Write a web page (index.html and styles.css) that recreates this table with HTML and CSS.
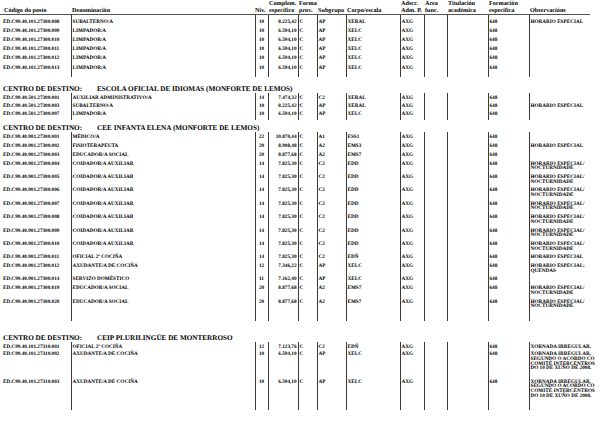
FILE: index.html
```html
<!DOCTYPE html>
<html lang="gl">
<head>
<meta charset="utf-8">
<title>Relación de postos</title>
<link rel="stylesheet" href="styles.css">
</head>
<body>
<div class="page">

<table class="grid hdr">
<colgroup><col class="c1"><col class="c2"><col class="c3"><col class="c4"><col class="c5"><col class="c6"><col class="c7"><col class="c8"><col class="c9"><col class="c10"><col class="c11"><col class="c12"></colgroup>
<tr>
<th class="first">Código do posto</th>
<th>Denominación</th>
<th class="niv-h">Niv.</th>
<th>Complem.<br>específico</th>
<th>Forma<br>prov.</th>
<th>Subgrupo</th>
<th>Corpo/escala</th>
<th>Adscr.<br>Adm. P.</th>
<th>Área<br>func.</th>
<th>Titulación<br>académica</th>
<th>Formación<br>específica</th>
<th>Observacións</th>
</tr>
</table>

<table class="grid blk b1">
<colgroup><col class="c1"><col class="c2"><col class="c3"><col class="c4"><col class="c5"><col class="c6"><col class="c7"><col class="c8"><col class="c9"><col class="c10"><col class="c11"><col class="c12"></colgroup>
<tr><td>ED.C99.40.101.27300.008</td><td>SUBALTERNO/A</td><td class="niv">10</td><td class="num">8.225,42</td><td>C</td><td>AP</td><td>XERAL</td><td>AXG</td><td></td><td></td><td>648</td><td>HORARIO ESPECIAL</td></tr>
<tr><td>ED.C99.40.101.27300.009</td><td>LIMPADOR/A</td><td class="niv">10</td><td class="num">6.594,10</td><td>C</td><td>AP</td><td>XELC</td><td>AXG</td><td></td><td></td><td>648</td><td></td></tr>
<tr><td>ED.C99.40.101.27300.010</td><td>LIMPADOR/A</td><td class="niv">10</td><td class="num">6.594,10</td><td>C</td><td>AP</td><td>XELC</td><td>AXG</td><td></td><td></td><td>648</td><td></td></tr>
<tr><td>ED.C99.40.101.27300.011</td><td>LIMPADOR/A</td><td class="niv">10</td><td class="num">6.594,10</td><td>C</td><td>AP</td><td>XELC</td><td>AXG</td><td></td><td></td><td>648</td><td></td></tr>
<tr><td>ED.C99.40.101.27300.012</td><td>LIMPADOR/A</td><td class="niv">10</td><td class="num">6.594,10</td><td>C</td><td>AP</td><td>XELC</td><td>AXG</td><td></td><td></td><td>648</td><td></td></tr>
<tr><td>ED.C99.40.101.27300.013</td><td>LIMPADOR/A</td><td class="niv">10</td><td class="num">6.594,10</td><td>C</td><td>AP</td><td>XELC</td><td>AXG</td><td></td><td></td><td>648</td><td></td></tr>
<tr class="end end-1"><td></td><td></td><td></td><td></td><td></td><td></td><td></td><td></td><td></td><td></td><td></td><td></td></tr>
</table>

<h2 class="dest d2"><span class="lbl">CENTRO DE DESTINO:</span>ESCOLA OFICIAL DE IDIOMAS (MONFORTE DE LEMOS)</h2>
<table class="grid blk b2">
<colgroup><col class="c1"><col class="c2"><col class="c3"><col class="c4"><col class="c5"><col class="c6"><col class="c7"><col class="c8"><col class="c9"><col class="c10"><col class="c11"><col class="c12"></colgroup>
<tr><td>ED.C99.40.501.27300.001</td><td>AUXILIAR ADMINISTRATIVO/A</td><td class="niv">14</td><td class="num">7.474,32</td><td>C</td><td>C2</td><td>XERAL</td><td>AXG</td><td></td><td></td><td>648</td><td></td></tr>
<tr><td>ED.C99.40.501.27300.003</td><td>SUBALTERNO/A</td><td class="niv">10</td><td class="num">8.225,42</td><td>C</td><td>AP</td><td>XERAL</td><td>AXG</td><td></td><td></td><td>648</td><td>HORARIO ESPECIAL</td></tr>
<tr><td>ED.C99.40.501.27300.007</td><td>LIMPADOR/A</td><td class="niv">10</td><td class="num">6.594,10</td><td>C</td><td>AP</td><td>XELC</td><td>AXG</td><td></td><td></td><td>648</td><td></td></tr>
<tr class="end end-2"><td></td><td></td><td></td><td></td><td></td><td></td><td></td><td></td><td></td><td></td><td></td><td></td></tr>
</table>

<h2 class="dest d3"><span class="lbl">CENTRO DE DESTINO:</span>CEE INFANTA ELENA (MONFORTE DE LEMOS)</h2>
<table class="grid blk b3">
<colgroup><col class="c1"><col class="c2"><col class="c3"><col class="c4"><col class="c5"><col class="c6"><col class="c7"><col class="c8"><col class="c9"><col class="c10"><col class="c11"><col class="c12"></colgroup>
<tr><td>ED.C99.40.901.27300.001</td><td>MÉDICO/A</td><td class="niv">22</td><td class="num">10.870,44</td><td>C</td><td>A1</td><td>ESS1</td><td>AXG</td><td></td><td></td><td>648</td><td></td></tr>
<tr><td>ED.C99.40.901.27300.002</td><td>FISIOTERAPEUTA</td><td class="niv">20</td><td class="num">8.908,48</td><td>C</td><td>A2</td><td>EMS3</td><td>AXG</td><td></td><td></td><td>648</td><td>HORARIO ESPECIAL</td></tr>
<tr><td>ED.C99.40.901.27300.003</td><td>EDUCADOR/A SOCIAL</td><td class="niv">20</td><td class="num">8.877,68</td><td>C</td><td>A2</td><td>EMS7</td><td>AXG</td><td></td><td></td><td>648</td><td></td></tr>
<tr><td>ED.C99.40.901.27300.004</td><td>COIDADOR/A AUXILIAR</td><td class="niv">14</td><td class="num">7.825,30</td><td>C</td><td>C2</td><td>EDD</td><td>AXG</td><td></td><td></td><td>648</td><td>HORARIO ESPECIAL/<br>NOCTURNIDADE</td></tr>
<tr><td>ED.C99.40.901.27300.005</td><td>COIDADOR/A AUXILIAR</td><td class="niv">14</td><td class="num">7.825,30</td><td>C</td><td>C2</td><td>EDD</td><td>AXG</td><td></td><td></td><td>648</td><td>HORARIO ESPECIAL/<br>NOCTURNIDADE</td></tr>
<tr><td>ED.C99.40.901.27300.006</td><td>COIDADOR/A AUXILIAR</td><td class="niv">14</td><td class="num">7.825,30</td><td>C</td><td>C2</td><td>EDD</td><td>AXG</td><td></td><td></td><td>648</td><td>HORARIO ESPECIAL/<br>NOCTURNIDADE</td></tr>
<tr><td>ED.C99.40.901.27300.007</td><td>COIDADOR/A AUXILIAR</td><td class="niv">14</td><td class="num">7.825,30</td><td>C</td><td>C2</td><td>EDD</td><td>AXG</td><td></td><td></td><td>648</td><td>HORARIO ESPECIAL/<br>NOCTURNIDADE</td></tr>
<tr><td>ED.C99.40.901.27300.008</td><td>COIDADOR/A AUXILIAR</td><td class="niv">14</td><td class="num">7.825,30</td><td>C</td><td>C2</td><td>EDD</td><td>AXG</td><td></td><td></td><td>648</td><td>HORARIO ESPECIAL/<br>NOCTURNIDADE</td></tr>
<tr><td>ED.C99.40.901.27300.009</td><td>COIDADOR/A AUXILIAR</td><td class="niv">14</td><td class="num">7.825,30</td><td>C</td><td>C2</td><td>EDD</td><td>AXG</td><td></td><td></td><td>648</td><td>HORARIO ESPECIAL/<br>NOCTURNIDADE</td></tr>
<tr><td>ED.C99.40.901.27300.010</td><td>COIDADOR/A AUXILIAR</td><td class="niv">14</td><td class="num">7.825,30</td><td>C</td><td>C2</td><td>EDD</td><td>AXG</td><td></td><td></td><td>648</td><td>HORARIO ESPECIAL/<br>NOCTURNIDADE</td></tr>
<tr><td>ED.C99.40.901.27300.011</td><td>OFICIAL 2ª COCIÑA</td><td class="niv">14</td><td class="num">7.825,30</td><td>C</td><td>C2</td><td>EDÑ</td><td>AXG</td><td></td><td></td><td>648</td><td>HORARIO ESPECIAL</td></tr>
<tr><td>ED.C99.40.901.27300.012</td><td>AXUDANTE/A DE COCIÑA</td><td class="niv">12</td><td class="num">7.346,22</td><td>C</td><td>AP</td><td>XELC</td><td>AXG</td><td></td><td></td><td>648</td><td>HORARIO ESPECIAL:<br>QUENDAS</td></tr>
<tr><td>ED.C99.40.901.27300.014</td><td>SERVIZO DOMÉSTICO</td><td class="niv">11</td><td class="num">7.162,40</td><td>C</td><td>AP</td><td>XELC</td><td>AXG</td><td></td><td></td><td>648</td><td></td></tr>
<tr><td>ED.C99.40.901.27300.019</td><td>EDUCADOR/A SOCIAL</td><td class="niv">20</td><td class="num">8.877,68</td><td>C</td><td>A2</td><td>EMS7</td><td>AXG</td><td></td><td></td><td>648</td><td>HORARIO ESPECIAL/<br>NOCTURNIDADE</td></tr>
<tr><td>ED.C99.40.901.27300.020</td><td>EDUCADOR/A SOCIAL</td><td class="niv">20</td><td class="num">8.877,68</td><td>C</td><td>A2</td><td>EMS7</td><td>AXG</td><td></td><td></td><td>648</td><td>HORARIO ESPECIAL/<br>NOCTURNIDADE</td></tr>
<tr class="end end-3"><td></td><td></td><td></td><td></td><td></td><td></td><td></td><td></td><td></td><td></td><td></td><td></td></tr>
</table>

<h2 class="dest d4"><span class="lbl">CENTRO DE DESTINO:</span>CEIP PLURILINGÜE DE MONTERROSO</h2>
<table class="grid blk b4">
<colgroup><col class="c1"><col class="c2"><col class="c3"><col class="c4"><col class="c5"><col class="c6"><col class="c7"><col class="c8"><col class="c9"><col class="c10"><col class="c11"><col class="c12"></colgroup>
<tr><td>ED.C99.40.101.27310.001</td><td>OFICIAL 2ª COCIÑA</td><td class="niv">12</td><td class="num">7.123,76</td><td>C</td><td>C2</td><td>EDÑ</td><td>AXG</td><td></td><td></td><td>648</td><td>XORNADA IRREGULAR.</td></tr>
<tr><td>ED.C99.40.101.27310.002</td><td>AXUDANTE/A DE COCIÑA</td><td class="niv">10</td><td class="num">6.594,10</td><td>C</td><td>AP</td><td>XELC</td><td>AXG</td><td></td><td></td><td>648</td><td>XORNADA IRREGULAR,<br>SEGUNDO O ACORDO CO<br>COMITÉ INTERCENTROS<br>DO 10 DE XUÑO DE 2008.</td></tr>
<tr class="gap-big"><td>ED.C99.40.101.27310.003</td><td>AXUDANTE/A DE COCIÑA</td><td class="niv">10</td><td class="num">6.594,10</td><td>C</td><td>AP</td><td>XELC</td><td>AXG</td><td></td><td></td><td>648</td><td>XORNADA IRREGULAR,<br>SEGUNDO O ACORDO CO<br>COMITÉ INTERCENTROS<br>DO 10 DE XUÑO DE 2008.</td></tr>
<tr class="end end-4"><td></td><td></td><td></td><td></td><td></td><td></td><td></td><td></td><td></td><td></td><td></td><td></td></tr>
</table>

</div>
</body>
</html>
```

FILE: styles.css
```css
html, body {
  margin: 0;
  padding: 0;
  background: #ffffff;
}

body {
  font-family: "Liberation Serif", "Times New Roman", serif;
  font-weight: bold;
  color: #000000;
  text-rendering: geometricPrecision;
}

.page {
  width: 615px;
}

.grid {
  border-collapse: collapse;
  table-layout: fixed;
  width: 590px;
}

.c1 { width: 71px; }
.c2 { width: 184px; }
.c3 { width: 13px; }
.c4 { width: 30px; }
.c5 { width: 19px; }
.c6 { width: 29px; }
.c7 { width: 54px; }
.c8 { width: 24px; }
.c9 { width: 23px; }
.c10 { width: 41px; }
.c11 { width: 41px; }
.c12 { width: 61px; }

/* column header */
.hdr th {
  font-size: 6.2px;
  line-height: 7px;
  font-weight: bold;
  text-align: left;
  vertical-align: bottom;
  padding: 0 0 0 1px;
  white-space: nowrap;
  border-bottom: 1px solid #555555;
}

.hdr th.first {
  padding-left: 4px;
}

.hdr th.niv-h {
  padding-left: 0;
}

/* data blocks */
.blk td {
  font-size: 5.2px;
  line-height: 4.7px;
  vertical-align: top;
  padding: 3px 1px 0 1px;
  white-space: nowrap;
}

.blk td:first-child {
  padding-left: 3px;
}

.blk td + td {
  border-left: 1px solid #3a3a3a;
}

.blk td.num {
  text-align: right;
}

.blk td.niv {
  text-align: center;
}

.b1 td {
  padding-top: 4.5px;
}

.b2 td {
  padding-top: 3.3px;
}

.b3 td {
  padding-top: 4px;
}

.b4 td {
  padding-top: 3px;
}

.b2 tr:first-child td,
.b3 tr:first-child td,
.b4 tr:first-child td {
  padding-top: 3px;
}

.b4 tr.gap-big td {
  padding-top: 8.5px;
}

.blk tr.end td {
  padding: 0;
}

.blk tr.end-1 td { height: 7px; }
.blk tr.end-2 td { height: 4px; }
.blk tr.end-3 td { height: 11.5px; }
.blk tr.end-4 td { height: 12px; }

/* centre headings */
.dest {
  margin: 8.5px 0 0 0;
  padding-left: 3px;
  font-size: 7.2px;
  line-height: 7px;
  font-weight: bold;
  white-space: nowrap;
}

.dest.d3 {
  margin-top: 5px;
}

.dest.d4 {
  margin-top: 14px;
}

.dest .lbl {
  margin-right: 15px;
}
```
